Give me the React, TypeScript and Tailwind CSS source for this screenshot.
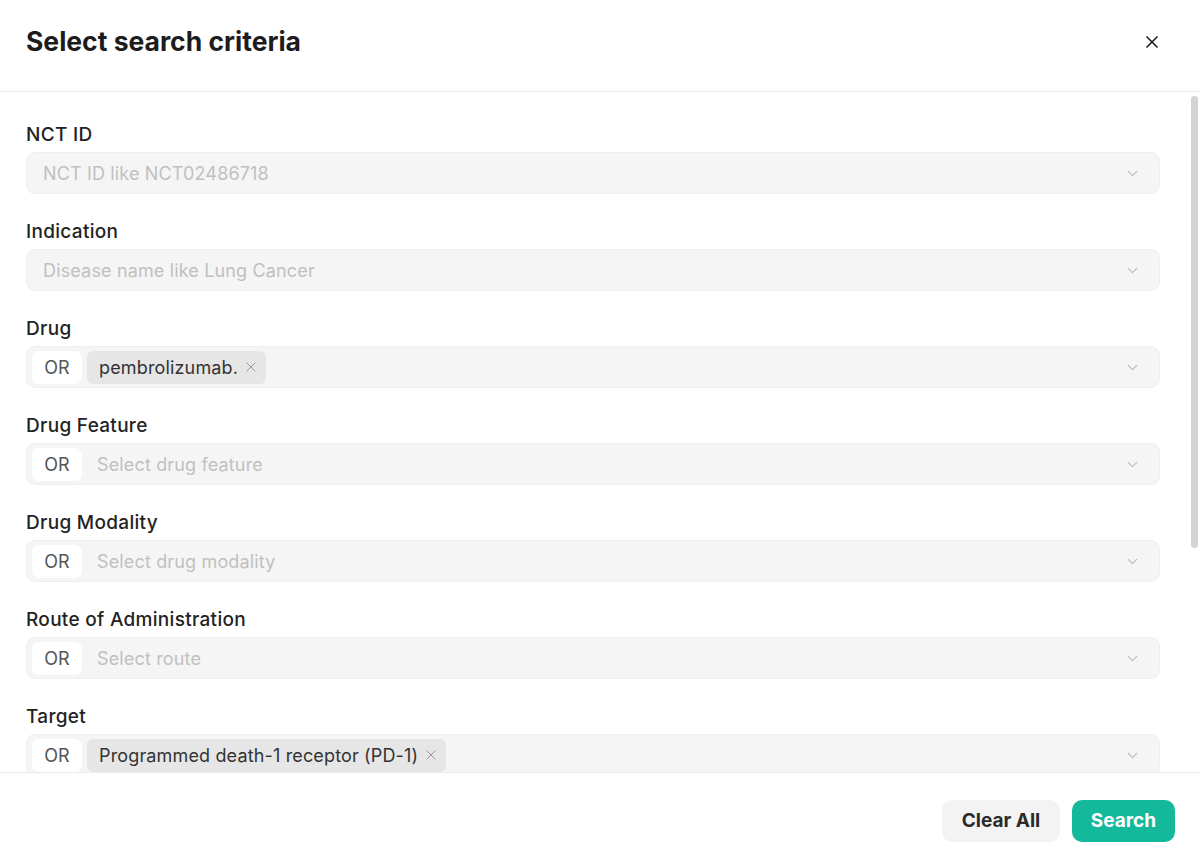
import { ChevronDown, X } from "lucide-react";

type Field = {
  label: string;
  placeholder: string;
  logic?: boolean;
  tags?: string[];
};

const fields: Field[] = [
  { label: "NCT ID", placeholder: "NCT ID like NCT02486718" },
  { label: "Indication", placeholder: "Disease name like Lung Cancer" },
  { label: "Drug", placeholder: "Select drug", logic: true, tags: ["pembrolizumab."] },
  { label: "Drug Feature", placeholder: "Select drug feature", logic: true },
  { label: "Drug Modality", placeholder: "Select drug modality", logic: true },
  { label: "Route of Administration", placeholder: "Select route", logic: true },
  { label: "Target", placeholder: "Select target", logic: true, tags: ["Programmed death-1 receptor (PD-1)"] },
];

function SelectBox({ field }: { field: Field }) {
  const tags = field.tags ?? [];
  return (
    <div className="flex h-[42px] shrink-0 items-center rounded-[9px] border border-[#efefef] bg-[#f5f5f5] pr-[18px] text-[18px] tracking-[0.15px]">
      {field.logic ? (
        <div className="flex flex-1 items-center gap-[5px] pl-[5px]">
          <span className="flex h-[33px] w-[50px] items-center justify-center rounded-[7px] bg-white text-[#555]">
            OR
          </span>
          {tags.length > 0 ? (
            tags.map((t) => (
              <span
                key={t}
                className="flex h-[33px] items-center gap-[5px] rounded-[6px] bg-[#e6e6e6] pl-3 pr-[7px] text-[#333]"
              >
                {t}
                <X size={16} strokeWidth={1.5} className="text-[#999]" />
              </span>
            ))
          ) : (
            <span className="pl-[10px] text-[#c0c0c0]">{field.placeholder}</span>
          )}
        </div>
      ) : (
        <span className="flex-1 pl-4 text-[#c0c0c0]">{field.placeholder}</span>
      )}
      <ChevronDown size={17} strokeWidth={1.6} className="text-[#b8b8b8]" />
    </div>
  );
}

export default function App() {
  return (
    <div className="flex h-[865px] w-[1200px] flex-col overflow-hidden bg-white font-['Inter',sans-serif]">
      <div className="flex h-[92px] shrink-0 items-center justify-between border-b border-[#ebebeb] pb-2 pl-[26px] pr-[38px]">
        <h1 className="text-[26.5px] font-bold text-[#1c1c1c]">Select search criteria</h1>
        <X size={20} strokeWidth={2} className="text-[#222]" />
      </div>

      <div className="relative flex-1 overflow-hidden">
        <div className="flex flex-col pl-[26px] pr-[40px] pt-[31px]">
          {fields.map((f) => (
            <div key={f.label} className="mb-[26px] flex flex-col gap-[5px]">
              <label className="text-[19px] font-medium leading-[24px] tracking-[0.3px] text-[#232323]">{f.label}</label>
              <SelectBox field={f} />
            </div>
          ))}
        </div>
        {/* scroll thumb */}
        <div className="absolute right-[2px] top-[4px] h-[452px] w-[7px] rounded-full bg-[#d4d4d4]" />
      </div>

      <div className="flex h-[93px] shrink-0 items-center justify-end gap-3 border-t border-[#ebebeb] pr-[25px] pt-1">
        <button className="h-[42px] w-[118px] rounded-[10px] bg-[#f3f3f3] text-[19px] font-bold text-[#2a2a2a]">
          Clear All
        </button>
        <button className="h-[42px] w-[103px] rounded-[10px] bg-[#14b99b] text-[19px] font-bold text-white">
          Search
        </button>
      </div>
    </div>
  );
}
